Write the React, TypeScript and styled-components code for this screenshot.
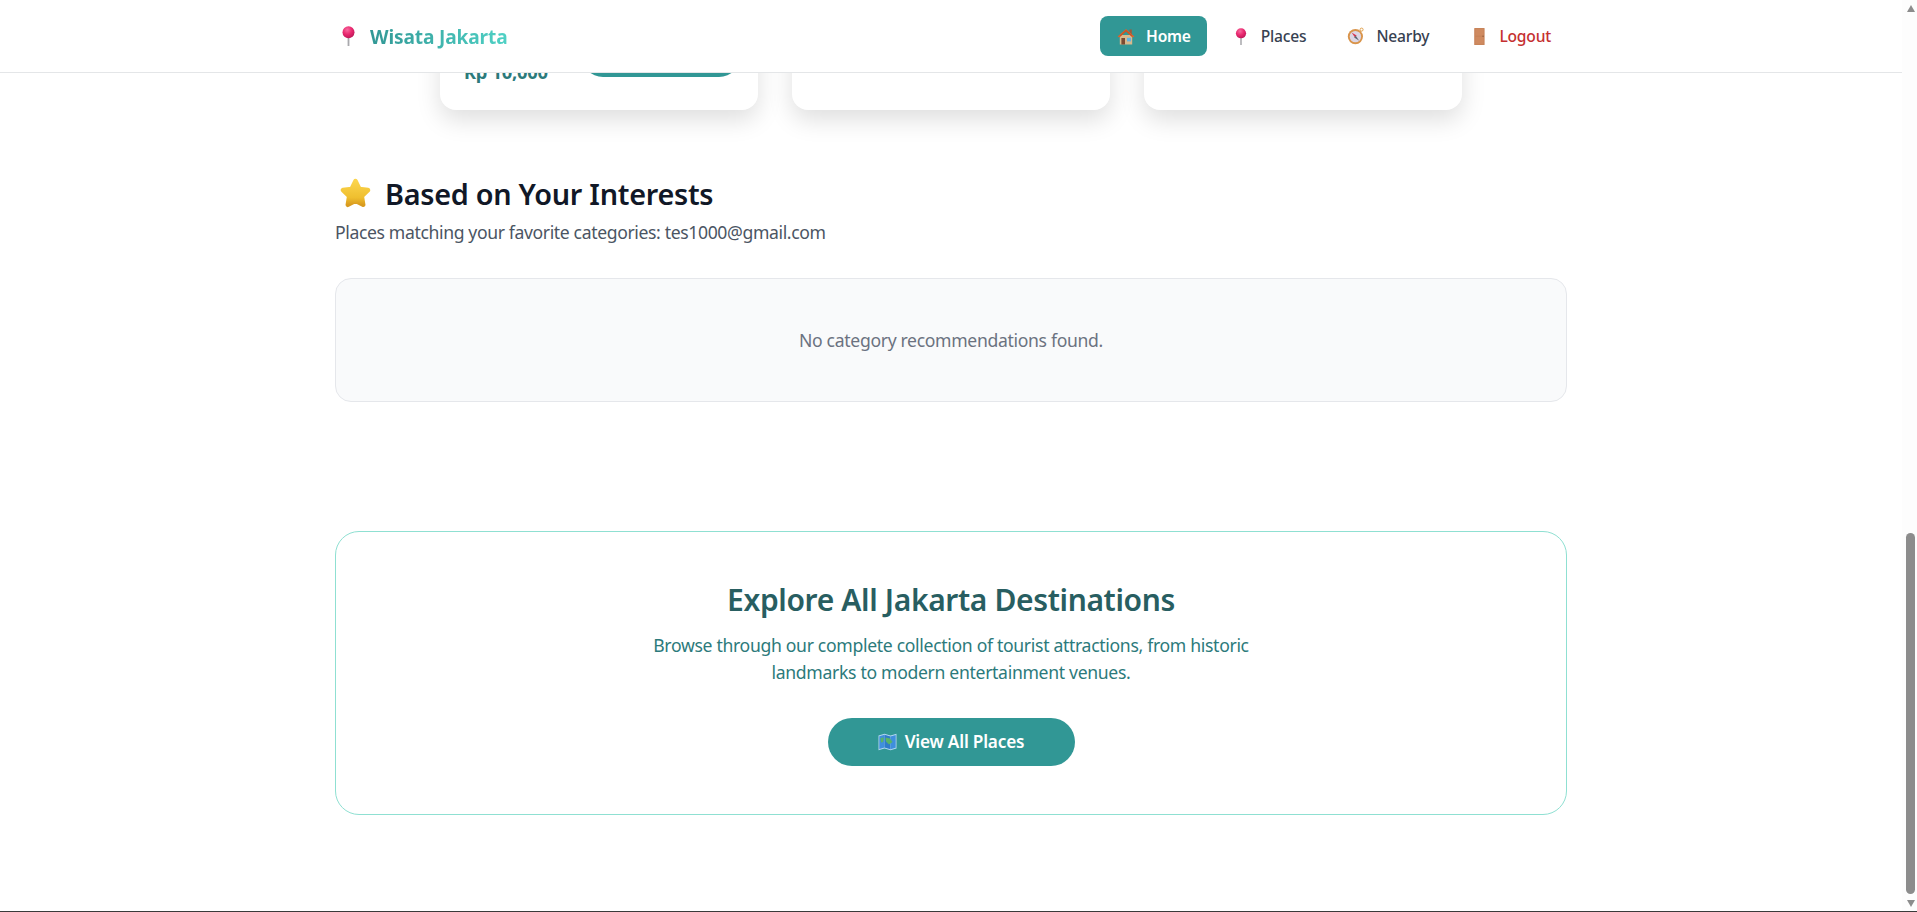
import React from 'react';
import styled, { createGlobalStyle } from 'styled-components';

const FONT = '"Noto Sans", "Open Sans", "Liberation Sans", sans-serif';

function PinIcon({ id, w, h }: { id: string; w: number; h: number }) {
  return (
    <svg width={w} height={h} viewBox='0 0 13 20'>
      <defs>
        <radialGradient id={id} cx='0.4' cy='0.3' r='0.75'>
          <stop offset='0' stopColor='#f76a9f' />
          <stop offset='0.5' stopColor='#ea2a70' />
          <stop offset='1' stopColor='#b91555' />
        </radialGradient>
      </defs>
      <rect x='5.6' y='10' width='1.8' height='10' fill='#a9a9ad' />
      <circle cx='6.5' cy='6.2' r='6' fill={`url(#${id})`} />
    </svg>
  );
}

function HouseIcon() {
  return (
    <svg width='18' height='17' viewBox='0 0 18 17'>
      <rect x='12.6' y='1.5' width='2.2' height='5' fill='#9c5b3c' />
      <rect x='2.8' y='7' width='12.4' height='9.5' fill='#d8b98c' />
      <path d='M0.6 8.6 L9 1 L17.4 8.6 L15.8 9.6 L9 3.6 L2.2 9.6 Z' fill='#d9652f' />
      <path d='M9 3.6 L2.8 9 V7.4 L9 1.8 L15.2 7.4 V9 Z' fill='#c65427' />
      <rect x='4.4' y='10' width='3.6' height='6.5' fill='#7a4a32' />
      <rect x='10' y='9.8' width='4' height='3.6' fill='#5fb4e6' />
    </svg>
  );
}

function CompassIcon() {
  return (
    <svg width='18' height='18' viewBox='0 0 18 18'>
      <circle cx='14.6' cy='2.6' r='1.5' fill='none' stroke='#e0a04a' strokeWidth='1' />
      <circle cx='8.4' cy='9.6' r='7.6' fill='#d9944a' />
      <circle cx='8.4' cy='9.6' r='5.7' fill='#dcd6e4' />
      <path d='M4.6 5.4 L9.6 8.6 L8 10.4 Z' fill='#d6354f' />
      <path d='M12.2 13.8 L7.2 10.6 L8.8 8.8 Z' fill='#5a6672' />
    </svg>
  );
}

function DoorIcon() {
  return (
    <svg width='11' height='17' viewBox='0 0 11 17'>
      <rect x='0.2' y='0' width='10.4' height='17' rx='0.6' fill='#c8845a' />
      <rect x='1.4' y='1.2' width='8' height='6.4' fill='#cf8a60' />
      <rect x='1.4' y='9' width='8' height='6.8' fill='#cf8a60' />
      <rect x='8.4' y='7.6' width='1.4' height='1.4' fill='#9c6240' />
    </svg>
  );
}

function StarIcon() {
  return (
    <svg width='31' height='30' viewBox='0 0 31 30'>
      <defs>
        <linearGradient id='star-fill' x1='0' y1='0' x2='0' y2='1'>
          <stop offset='0' stopColor='#fbd44c' />
          <stop offset='0.7' stopColor='#efbf2f' />
          <stop offset='1' stopColor='#d99b1f' />
        </linearGradient>
      </defs>
      <path
        d='M15.5 3 L19.4 10.9 L28 12.1 L21.8 18.2 L23.2 26.8 L15.5 22.7 L7.8 26.8 L9.2 18.2 L3 12.1 L11.6 10.9 Z'
        fill='url(#star-fill)'
        stroke='url(#star-fill)'
        strokeWidth='4.5'
        strokeLinejoin='round'
      />
    </svg>
  );
}

function MapIcon() {
  return (
    <svg width='19' height='18' viewBox='0 0 19 18'>
      <path d='M0.5 2.5 L6.5 0.8 L12.5 2.5 L18.5 0.8 V15.5 L12.5 17.2 L6.5 15.5 L0.5 17.2 Z' fill='#b5d8f2' />
      <path d='M1.3 3.2 L6.5 1.8 V14.6 L1.3 16 Z' fill='#3f8fdc' />
      <path d='M6.5 1.8 L12.5 3.4 V16.2 L6.5 14.6 Z' fill='#2f7cc9' />
      <path d='M12.5 3.4 L17.7 2 V14.8 L12.5 16.2 Z' fill='#3f8fdc' />
      <path d='M7.5 4.5 L12 5.5 L14.5 9 L11 11.5 L8 8.5 Z' fill='#58b368' />
      <path d='M2.5 5 L5.8 4.5 L5.2 9 L3 9.5 Z' fill='#58b368' />
    </svg>
  );
}

function App() {
  return (
    <>
      <GlobalStyle />
      <Screen>
        <Frame>
          <Viewport>
            <Navbar>
              <NavInner>
                <Logo>
                  <PinIcon id='pin-logo' w={13} h={20} />
                  <LogoText>Wisata Jakarta</LogoText>
                </Logo>
                <NavLinks>
                  <NavLink $active>
                    <EmojiBox><HouseIcon /></EmojiBox>
                    Home
                  </NavLink>
                  <NavLink>
                    <EmojiBox><PinIcon id='pin-nav' w={12} h={17} /></EmojiBox>
                    Places
                  </NavLink>
                  <NavLink>
                    <EmojiBox><CompassIcon /></EmojiBox>
                    Nearby
                  </NavLink>
                  <NavLink $danger>
                    <EmojiBox><DoorIcon /></EmojiBox>
                    Logout
                  </NavLink>
                </NavLinks>
              </NavInner>
            </Navbar>

            <Container>
              <CardRow>
                <PlaceCard>
                  <CardFooter>
                    <Price>Rp 10,000</Price>
                    <DetailButton />
                  </CardFooter>
                </PlaceCard>
                <PlaceCard />
                <PlaceCard />
              </CardRow>

              <SectionTitle>
                <StarIcon />
                Based on Your Interests
              </SectionTitle>
              <SectionText>Places matching your favorite categories: tes1000@gmail.com</SectionText>
              <EmptyBox>No category recommendations found.</EmptyBox>

              <ExploreBox>
                <ExploreTitle>Explore All Jakarta Destinations</ExploreTitle>
                <ExploreText>
                  Browse through our complete collection of tourist attractions, from historic landmarks to
                  modern entertainment venues.
                </ExploreText>
                <ExploreButton>
                  <MapIcon />
                  View All Places
                </ExploreButton>
              </ExploreBox>
            </Container>
          </Viewport>

          <ScrollRail>
            <ArrowUp />
            <ThumbSpace>
              <ScrollThumb />
            </ThumbSpace>
            <ArrowDown />
          </ScrollRail>
        </Frame>
        <BottomLine />
      </Screen>
    </>
  );
}

const GlobalStyle = createGlobalStyle`
  html, body {
    margin: 0;
    padding: 0;
    background: #fff;
    overflow: hidden;
  }

  * {
    box-sizing: border-box;
  }

  body {
    font-family: ${FONT};
  }
`;

const Screen = styled.div`
  display: flex;
  flex-direction: column;
  width: 1917px;
  height: 912px;
  overflow: hidden;
`;

const Frame = styled.div`
  display: flex;
  flex: 1;
  min-height: 0;
`;

const BottomLine = styled.div`
  height: 1px;
  background-color: #3a3a3a;
`;

const Viewport = styled.main`
  flex: 1;
  min-width: 0;
  overflow: hidden;
`;

const Navbar = styled.header`
  position: relative;
  z-index: 10;
  height: 73px;
  background-color: #fff;
  border-bottom: 1px solid #e4e6e8;
`;

const NavInner = styled.nav`
  display: flex;
  align-items: center;
  justify-content: space-between;
  width: 1232px;
  height: 72px;
  margin: 0 auto;
`;

const Logo = styled.div`
  display: flex;
  align-items: center;
  gap: 15px;
  padding-left: 7px;
`;

const LogoText = styled.span`
  font-size: 19.2px;
  font-weight: 700;
  letter-spacing: -0.17px;
  background: linear-gradient(90deg, #319795, #4fd1c5);
  -webkit-background-clip: text;
  background-clip: text;
  color: transparent;
`;

const NavLinks = styled.div`
  display: flex;
  align-items: center;
  gap: 8px;
`;

const NavLink = styled.a<{ $active?: boolean; $danger?: boolean }>`
  display: flex;
  align-items: center;
  gap: 10px;
  height: 40px;
  padding: 0 16px;
  border-radius: 8px;
  font-size: 15.6px;
  font-weight: ${(p) => (p.$active ? 600 : 500)};
  letter-spacing: -0.2px;
  background-color: ${(p) => (p.$active ? '#319795' : 'transparent')};
  color: ${(p) => (p.$active ? '#fff' : p.$danger ? '#c53030' : '#374151')};
`;

const EmojiBox = styled.span`
  display: flex;
  align-items: center;
  justify-content: center;
  width: 20px;
  height: 20px;
`;

const Container = styled.div`
  width: 1232px;
  margin: 0 auto;
`;

const CardRow = styled.div`
  display: flex;
  justify-content: center;
  gap: 34px;
  margin-top: -163px;
`;

const PlaceCard = styled.article`
  display: flex;
  flex-direction: column;
  justify-content: flex-end;
  width: 318px;
  height: 200px;
  padding: 0 17px 26px 24px;
  background-color: #fff;
  border-radius: 16px;
  box-shadow: 0 10px 25px rgba(0, 0, 0, 0.13);
`;

const CardFooter = styled.div`
  display: flex;
  align-items: flex-end;
  justify-content: space-between;
`;

const Price = styled.span`
  font-size: 18.4px;
  font-weight: 700;
  line-height: 24px;
  letter-spacing: -0.3px;
  color: #2c7a7b;
`;

const DetailButton = styled.div`
  width: 160px;
  height: 44px;
  margin-bottom: 7px;
  border-radius: 22px;
  background-color: #319795;
`;

const SectionTitle = styled.h2`
  display: flex;
  align-items: center;
  gap: 14px;
  height: 38px;
  margin: 65px 0 0;
  padding: 0 0 2px 5px;
  font-size: 28.8px;
  font-weight: 600;
  letter-spacing: -0.27px;
  color: #111827;
`;

const SectionText = styled.p`
  margin: 6px 0 0;
  font-size: 17.6px;
  line-height: 27px;
  letter-spacing: -0.37px;
  color: #4b5563;
`;

const EmptyBox = styled.div`
  margin-top: 32px;
  padding: 48px 0;
  background-color: #f9fafb;
  border: 1px solid #e5e7eb;
  border-radius: 16px;
  text-align: center;
  font-size: 17.6px;
  line-height: 26px;
  letter-spacing: -0.33px;
  color: #6b7280;
`;

const ExploreBox = styled.section`
  display: flex;
  flex-direction: column;
  align-items: center;
  margin-top: 129px;
  padding: 48px 0;
  background-color: #fff;
  border: 1px solid #8fe0d2;
  border-radius: 24px;
`;

const ExploreTitle = styled.h2`
  margin: 0;
  font-size: 30px;
  font-weight: 600;
  line-height: 40px;
  letter-spacing: -0.36px;
  color: #285e61;
`;

const ExploreText = styled.p`
  width: 600px;
  margin: 12px 0 0;
  text-align: center;
  font-size: 17.6px;
  line-height: 27px;
  letter-spacing: -0.32px;
  color: #2c7a7b;
`;

const ExploreButton = styled.a`
  display: flex;
  align-items: center;
  justify-content: center;
  gap: 8px;
  width: 247px;
  height: 48px;
  margin-top: 32px;
  padding-bottom: 1px;
  border-radius: 24px;
  background-color: #319795;
  font-size: 17.2px;
  font-weight: 600;
  letter-spacing: -0.2px;
  color: #fff;
`;

const ScrollRail = styled.div`
  display: flex;
  flex-direction: column;
  align-items: center;
  width: 15px;
  padding: 5px 2px 4px 4px;
  background-color: #fdfdfd;
`;

const ThumbSpace = styled.div`
  display: flex;
  flex: 1;
  flex-direction: column;
  justify-content: flex-end;
  width: 100%;
  padding-bottom: 6px;
`;

const ScrollThumb = styled.div`
  width: 100%;
  height: 361px;
  border-radius: 5px;
  background-color: #8c8c8c;
`;

const ArrowUp = styled.div`
  width: 0;
  height: 0;
  border-left: 4.5px solid transparent;
  border-right: 4.5px solid transparent;
  border-bottom: 7px solid #8c8c8c;
`;

const ArrowDown = styled.div`
  width: 0;
  height: 0;
  border-left: 4.5px solid transparent;
  border-right: 4.5px solid transparent;
  border-top: 7px solid #8c8c8c;
`;

export default App;
